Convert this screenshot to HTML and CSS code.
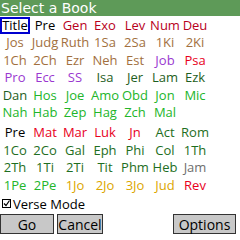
FILE: index.html
```html
<!DOCTYPE html>
<html lang="en">
<head>
  <meta charset="UTF-8">
  <title>Select a Book</title>
  <link rel="stylesheet" href="styles.css">
</head>
<body>
  <div class="form">
    <div class="title-bar">Select a Book</div>

    <div class="books">
      <span class="book black selected">Title</span>
      <span class="book black">Pre</span>
      <span class="book law">Gen</span>
      <span class="book law">Exo</span>
      <span class="book law">Lev</span>
      <span class="book law">Num</span>
      <span class="book law">Deu</span>

      <span class="book hist">Jos</span>
      <span class="book hist">Judg</span>
      <span class="book hist">Ruth</span>
      <span class="book hist">1Sa</span>
      <span class="book hist">2Sa</span>
      <span class="book hist">1Ki</span>
      <span class="book hist">2Ki</span>

      <span class="book hist">1Ch</span>
      <span class="book hist">2Ch</span>
      <span class="book hist">Ezr</span>
      <span class="book hist">Neh</span>
      <span class="book hist">Est</span>
      <span class="book poet">Job</span>
      <span class="book red">Psa</span>

      <span class="book poet">Pro</span>
      <span class="book poet">Ecc</span>
      <span class="book poet">SS</span>
      <span class="book major">Isa</span>
      <span class="book major">Jer</span>
      <span class="book major">Lam</span>
      <span class="book major">Ezk</span>

      <span class="book major">Dan</span>
      <span class="book minor">Hos</span>
      <span class="book minor">Joe</span>
      <span class="book minor">Amo</span>
      <span class="book minor">Obd</span>
      <span class="book minor">Jon</span>
      <span class="book minor">Mic</span>

      <span class="book minor">Nah</span>
      <span class="book minor">Hab</span>
      <span class="book minor">Zep</span>
      <span class="book minor">Hag</span>
      <span class="book minor">Zch</span>
      <span class="book minor">Mal</span>
    </div>

    <div class="books nt">
      <span class="book black">Pre</span>
      <span class="book red">Mat</span>
      <span class="book red">Mar</span>
      <span class="book red">Luk</span>
      <span class="book red">Jn</span>
      <span class="book epist">Act</span>
      <span class="book epist">Rom</span>

      <span class="book epist">1Co</span>
      <span class="book epist">2Co</span>
      <span class="book epist">Gal</span>
      <span class="book epist">Eph</span>
      <span class="book epist">Phi</span>
      <span class="book epist">Col</span>
      <span class="book epist">1Th</span>

      <span class="book epist">2Th</span>
      <span class="book epist">1Ti</span>
      <span class="book epist">2Ti</span>
      <span class="book epist">Tit</span>
      <span class="book epist">Phm</span>
      <span class="book epist">Heb</span>
      <span class="book gray">Jam</span>

      <span class="book minor">1Pe</span>
      <span class="book minor">2Pe</span>
      <span class="book gold">1Jo</span>
      <span class="book gold">2Jo</span>
      <span class="book gold">3Jo</span>
      <span class="book gold">Jud</span>
      <span class="book red">Rev</span>
    </div>

    <label class="verse-mode">
      <span class="check"><svg width="7" height="7" viewBox="0 0 7 7"><path d="M1 3.5 L3 5.5 L6.5 0.5" fill="none" stroke="#000" stroke-width="1.2"/></svg></span>
      Verse Mode
    </label>

    <div class="buttons">
      <button class="btn go">Go</button>
      <button class="btn cancel">Cancel</button>
      <button class="btn options">Options</button>
    </div>
  </div>
</body>
</html>
```

FILE: styles.css
```css
body {
  margin: 0;
  padding: 0;
  background: #ffffff;
  font-family: "Open Sans", sans-serif;
  font-size: 13px;
}
.form {
  width: 240px;
  height: 240px;
  overflow: hidden;
  background: #ffffff;
}
.title-bar {
  height: 16px;
  line-height: 16px;
  background: #5e9a58;
  color: #ffffff;
  font-family: "DejaVu Sans", sans-serif;
  font-size: 14px;
  padding-left: 1px;
}
.books {
  display: grid;
  grid-template-columns: repeat(7, 30px);
  grid-auto-rows: 17.4px;
  margin-top: 1px;
  font-size: 13px;
}
.books.nt {
  margin-top: 3px;
}
.book {
  line-height: 17.4px;
  text-align: center;
  white-space: nowrap;
}
.book.selected {
  border: 2px solid #0000d0;
  line-height: 13.4px;
}
.black { color: #000000; }
.law { color: #b8001c; }
.hist { color: #a2703e; }
.poet { color: #9a38d0; }
.red { color: #e8001c; }
.major { color: #1e5e22; }
.minor { color: #22b52a; }
.epist { color: #1e6e22; }
.gray { color: #6e6e6e; }
.gold { color: #dca600; }

.verse-mode {
  display: flex;
  align-items: center;
  gap: 2px;
  height: 18px;
  margin-top: 1px;
  padding-left: 2px;
  font-size: 13px;
}
.check {
  display: inline-flex;
  align-items: center;
  justify-content: center;
  width: 7px;
  height: 7px;
  border: 1px solid #000;
}
.buttons {
  display: flex;
  gap: 3px;
  margin-top: 1px;
}
.btn {
  font-family: "Open Sans", sans-serif;
  font-size: 14px;
  height: 20px;
  padding: 0;
  background: #c8c8c8;
  border: 1px solid #333333;
  color: #000;
}
.go { width: 54px; }
.cancel { width: 46px; }
.options { width: 63px; margin-left: auto; margin-right: 4px; }
```
